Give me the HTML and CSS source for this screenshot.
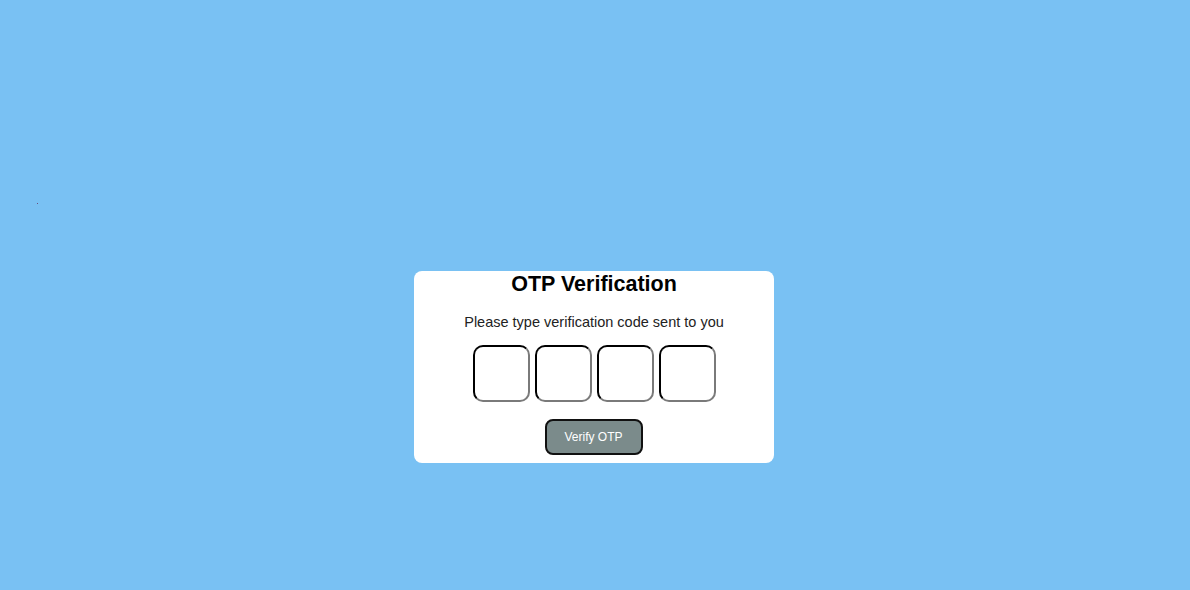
FILE: index.html
```html
<!DOCTYPE html>
<html>
<head>
<meta charset="utf-8">
<link rel="stylesheet" href="styles.css">
</head>
<body>
<span class="dot"></span>
<main class="page">
  <div class="card">
    <h1 class="title">OTP Verification</h1>
    <p class="subtitle">Please type verification code sent to you</p>
    <div class="otp">
      <input class="digit" type="text" maxlength="1">
      <input class="digit" type="text" maxlength="1">
      <input class="digit" type="text" maxlength="1">
      <input class="digit" type="text" maxlength="1">
    </div>
    <button class="verify">Verify OTP</button>
  </div>
</main>
</body>
</html>
```

FILE: styles.css
```css
html, body {
  margin: 0;
  padding: 0;
  height: 100%;
}
body {
  background: #79c1f3;
  font-family: "Liberation Sans", Arial, sans-serif;
  position: relative;
}
.dot {
  position: absolute;
  left: 37px;
  top: 203px;
  width: 1px;
  height: 1px;
  background: #6a4f7e;
}
.page {
  display: flex;
  justify-content: center;
  padding-top: 271px;
  padding-right: 2px;
}
.card {
  width: 360px;
  height: 192px;
  box-sizing: border-box;
  background: #fff;
  border-radius: 8px;
  display: flex;
  flex-direction: column;
  align-items: center;
}
.title {
  margin: 0;
  padding-top: 1px;
  font-size: 21.5px;
  font-weight: bold;
  color: #000;
  line-height: 24px;
}
.subtitle {
  margin: 18px 0 0;
  font-size: 14.5px;
  color: #222;
  line-height: 17px;
}
.otp {
  display: flex;
  gap: 5px;
  margin-top: 14px;
}
.digit {
  width: 57px;
  height: 57px;
  box-sizing: border-box;
  margin: 0;
  padding: 0;
  border: 2px inset #767676;
  border-top-color: #1a1a1a;
  border-left-color: #1a1a1a;
  border-right-color: #7a7a7a;
  border-bottom-color: #7a7a7a;
  border-radius: 10px;
  background: #fff;
}
.verify {
  margin-top: 17px;
  margin-right: 1px;
  width: 98px;
  height: 36px;
  box-sizing: border-box;
  background: #7b8b8b;
  color: #fff;
  border: 2px solid #111;
  border-radius: 8px;
  font-family: "Liberation Sans", Arial, sans-serif;
  font-size: 12px;
  padding: 0;
}
```
